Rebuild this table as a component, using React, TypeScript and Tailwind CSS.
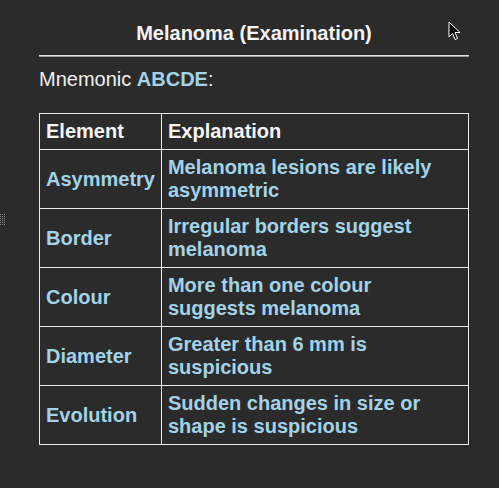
const rows = [
  { el: "Asymmetry", text: "Melanoma lesions are likely asymmetric" },
  { el: "Border", text: "Irregular borders suggest melanoma" },
  { el: "Colour", text: "More than one colour suggests melanoma" },
  { el: "Diameter", text: "Greater than 6 mm is suspicious" },
  { el: "Evolution", text: "Sudden changes in size or shape is suspicious" },
];

const cell = "border border-[#ececec] px-[6px] py-[6px] align-middle text-left";

const App = () => {
  return (
    <main className="relative min-h-screen bg-[#2b2b2b] font-['Liberation_Sans',Arial,sans-serif] text-[20px] leading-[23px]">
      <div className="ml-[39px] w-[430px] pt-[22px]">
        <h1 className="text-center font-bold text-[#f4f4f4]">Melanoma (Examination)</h1>
        <div className="mt-[10px] h-[2px] border-t border-b border-t-[#e2e2e2] border-b-[#9c9c9c]" />
        <p className="mt-[11px] text-[#f0f0f0]">
          Mnemonic <b className="text-[#a2d3e8]">ABCDE</b>:
        </p>
        <table className="mt-[22px] w-full border-collapse font-bold">
          <thead>
            <tr className="text-[#f6f6f6]">
              <th className={`${cell} w-[1%] whitespace-nowrap`}>Element</th>
              <th className={cell}>Explanation</th>
            </tr>
          </thead>
          <tbody className="text-[#a2d3e8]">
            {rows.map((r) => (
              <tr key={r.el}>
                <td className={`${cell} whitespace-nowrap`}>{r.el}</td>
                <td className={cell}>{r.text}</td>
              </tr>
            ))}
          </tbody>
        </table>
      </div>

      {/* mouse pointer */}
      <svg className="absolute left-[448px] top-[21px]" width="13" height="20" viewBox="0 0 13 20">
        <path d="M1 1 L1 16 L4.5 12.5 L7 18.5 L9.5 17.5 L7 11.5 L12 11.5 Z" fill="#000" stroke="#fff" strokeWidth="1" />
      </svg>

      {/* tiny grip on the left edge */}
      <svg className="absolute left-0 top-[214px]" width="6" height="11" viewBox="0 0 6 11">
        {[0, 2, 4, 6, 8, 10].map((y) =>
          [0, 2, 4].map((x) => <rect key={`${x}-${y}`} x={x} y={y} width="1" height="1" fill="#8a8a8a" />)
        )}
      </svg>
    </main>
  );
};

export default App;
